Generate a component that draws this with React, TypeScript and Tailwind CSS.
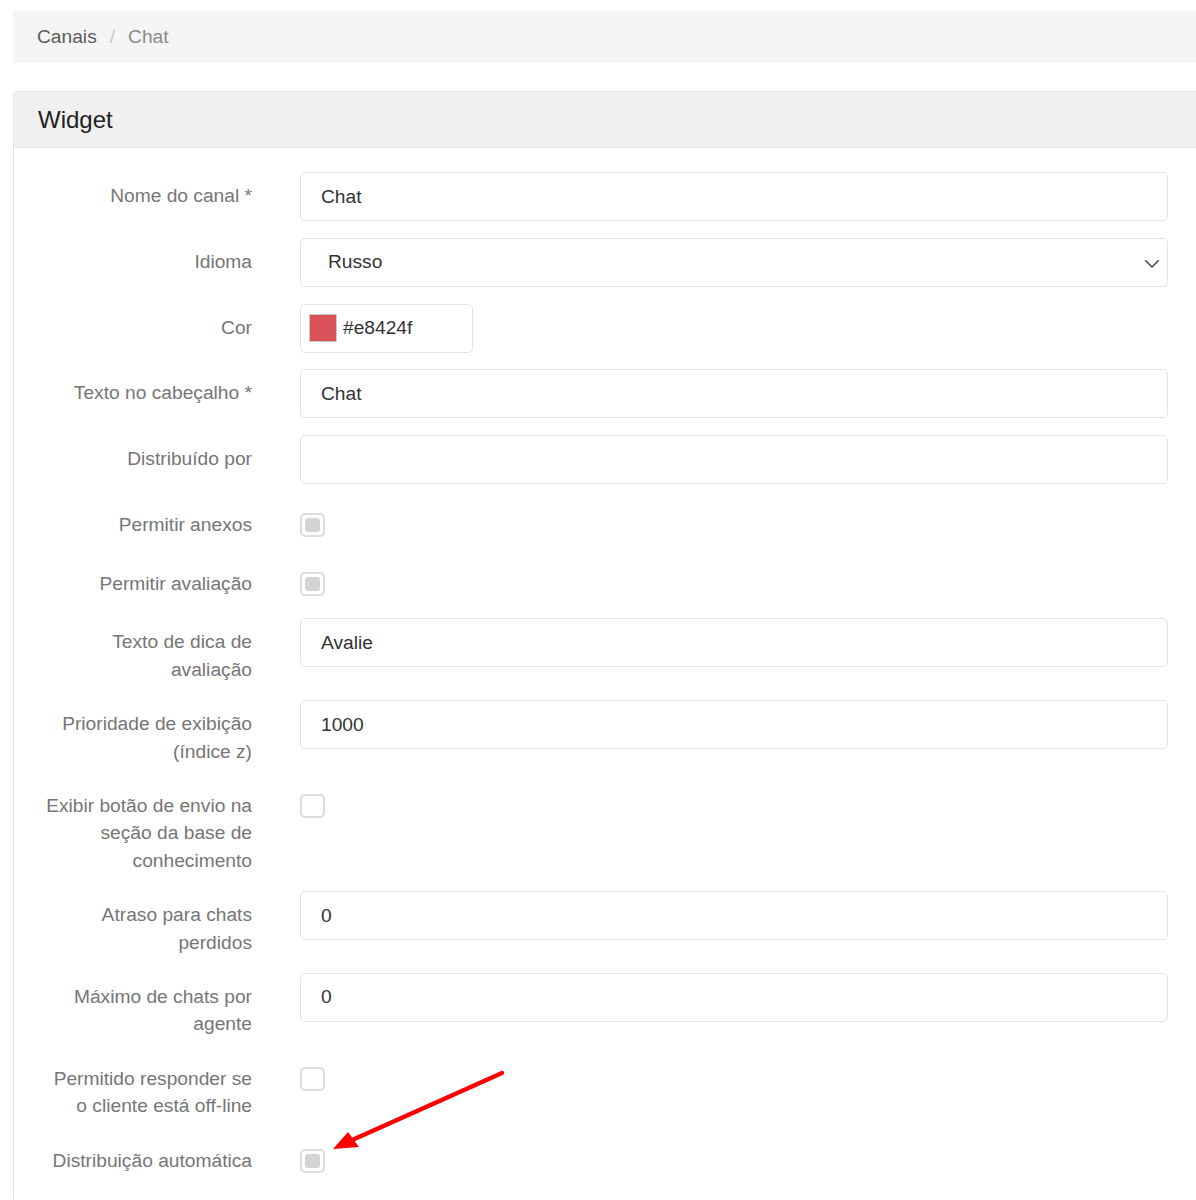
import React from 'react';

const font = { fontFamily: '"Liberation Sans", Arial, sans-serif' };

function Label({ children }: { children: React.ReactNode }) {
  return (
    <div className="w-[210px] shrink-0 pt-[10px] text-right text-[19.2px] leading-[27.5px] text-[#767676]">
      {children}
    </div>
  );
}

function TextRow({ label, value }: { label: React.ReactNode; value: string }) {
  return (
    <div className="flex gap-[48px]">
      <Label>{label}</Label>
      <div className="flex h-[49px] flex-1 items-center rounded-[5px] border border-[#e3e3e3] px-[20px] pt-[1px] text-[19.2px] text-[#333]">
        {value}
      </div>
    </div>
  );
}

function CheckRow({ label, filled, tall }: { label: React.ReactNode; filled?: boolean; tall?: boolean }) {
  return (
    <div className={`flex gap-[48px] ${tall ? '' : 'min-h-[42px]'}`}>
      <Label>{label}</Label>
      <div className="flex-1 pt-[12px]">
        <div className="flex h-[24px] w-[25px] items-center justify-center rounded-[5px] border-2 border-[#dcdcdc] bg-white">
          {filled && <div className="h-[14px] w-[15px] rounded-[3px] bg-[#d4d4d4]" />}
        </div>
      </div>
    </div>
  );
}

export default function App() {
  return (
    <div className="relative min-h-[1200px] bg-white pl-[13px] pt-[11px]" style={font}>
      <nav className="flex h-[52px] items-center bg-[#f5f5f5] pl-[24px] text-[19.2px]">
        <span className="text-[#5c5c5c]">Canais</span>
        <span className="px-[13px] text-[#c8c8c8]">/</span>
        <span className="text-[#8a8a8a]">Chat</span>
      </nav>

      <section className="mt-[28px] rounded-tl-[4px] border border-r-0 border-b-0 border-[#e2e2e2]">
        <header className="flex h-[56px] items-center border-b border-[#e8e8e8] bg-[#f0f0f0] pl-[24px] text-[24px] text-[#222]">
          Widget
        </header>

        <div className="flex flex-col gap-[16.75px] pb-[20px] pl-[28px] pr-[28px] pt-[24px]">
          <TextRow label="Nome do canal *" value="Chat" />

          <div className="flex gap-[48px]">
            <Label>Idioma</Label>
            <div className="flex h-[49px] flex-1 items-center justify-between rounded-[5px] border border-[#e3e3e3] pl-[27px] pr-[6px] pt-[1px] text-[19.2px] text-[#333]">
              <span>Russo</span>
              <svg width="18" height="18" viewBox="0 0 16 16" fill="none" className="text-[#444]">
                <path d="M2 5.5l6 6 6-6" stroke="currentColor" strokeWidth="1.3" />
              </svg>
            </div>
          </div>

          <div className="flex gap-[48px]">
            <Label>Cor</Label>
            <div className="flex-1">
              <div className="flex h-[49px] w-[173px] items-center gap-[6px] rounded-[5px] border border-[#e3e3e3] pl-[8px] text-[19.2px] text-[#333]">
                <div className="h-[28px] w-[28px] border border-[#c9c9c9] bg-[#da5157]" />
                <span>#e8424f</span>
              </div>
            </div>
          </div>

          <TextRow label="Texto no cabeçalho *" value="Chat" />
          <TextRow label="Distribuído por" value="" />
          <CheckRow label="Permitir anexos" filled />
          <CheckRow label="Permitir avaliação" filled />
          <TextRow label="Texto de dica de avaliação" value="Avalie" />
          <TextRow label="Prioridade de exibição (índice z)" value="1000" />
          <CheckRow label="Exibir botão de envio na seção da base de conhecimento" tall />
          <TextRow label="Atraso para chats perdidos" value="0" />
          <TextRow label="Máximo de chats por agente" value="0" />
          <CheckRow label="Permitido responder se o cliente está off-line" tall />
          <div className="mt-[1px]">
            <CheckRow label="Distribuição automática" filled />
          </div>
        </div>
      </section>

      <svg className="pointer-events-none absolute left-0 top-0" width="1196" height="1200">
        <line x1="502" y1="1073" x2="350" y2="1141" stroke="#ff0000" strokeWidth="4.5" strokeLinecap="round" />
        <polygon points="333,1149 348,1132 359,1147" fill="#ff0000" />
      </svg>
    </div>
  );
}
